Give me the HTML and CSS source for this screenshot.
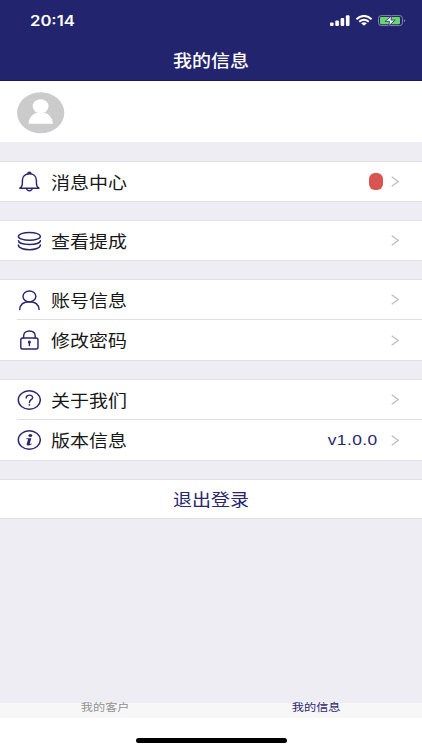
FILE: index.html
```html
<!DOCTYPE html>
<html lang="zh-CN">
<head>
    <meta charset="UTF-8">
    <meta name="viewport" content="width=device-width, initial-scale=1.0">
    <title>我的信息</title>
    <link rel="stylesheet" href="styles.css">
</head>
<body>
    <header class="header">
        <div class="status-bar">
            <span class="time">20:14</span>
            <div class="status-icons">
                <svg class="signal" width="20" height="12" viewBox="0 0 20 12">
                    <rect x="0" y="7.5" width="3.6" height="3.5" rx="1"/>
                    <rect x="5.3" y="5.5" width="3.6" height="5.5" rx="1"/>
                    <rect x="10.6" y="3" width="3.6" height="8" rx="1"/>
                    <rect x="15.9" y="0.3" width="3.6" height="10.7" rx="1"/>
                </svg>
                <svg class="wifi" width="18" height="12" viewBox="0 0 18 12">
                    <path d="M1.4 4.2Q9 -2.2 16.6 4.2" stroke-width="2.1"/>
                    <path d="M4.2 6.8Q9 2.8 13.8 6.8" stroke-width="1.9"/>
                    <path class="dot" d="M6.1 8.3Q9 6.2 11.9 8.3L9 10.8Z"/>
                </svg>
                <svg class="battery" width="28" height="12" viewBox="0 0 28 12">
                    <rect x="0.5" y="0.6" width="24" height="10" rx="2.8" fill="none" stroke="#8585af"/>
                    <rect x="2" y="2" width="20" height="7.2" rx="1.3" fill="#69d66c"/>
                    <path d="M26 4.2Q28.4 5.6 26 7.2Z" fill="#8585af"/>
                    <path d="M13.8 0.8L7.2 6.3H11.6L10.7 10.8L17.2 5.1H13Z" fill="#fff" stroke="#23246e" stroke-width="0.8"/>
                </svg>
            </div>
        </div>
        <h1 class="title"><span class="wide">我的信息</span></h1>
    </header>

    <main class="content">
        <section class="profile">
            <svg class="avatar" width="48" height="42" viewBox="0 0 48 42">
                <ellipse cx="23.7" cy="20.8" rx="23.6" ry="20.5" fill="#cbcbcb"/>
                <ellipse cx="23.6" cy="14.2" rx="7.9" ry="7" fill="#fff"/>
                <path d="M11.5 31.8C11.7 25 16.7 21.5 20.2 20.6Q23.7 22 27.2 20.6C30.7 21.5 35.7 25 35.9 31.8Z" fill="#fff"/>
            </svg>
        </section>

        <section class="panel">
            <a class="row">
                <svg class="icon" width="24" height="22" viewBox="0 0 24 22">
                    <path d="M2.8 17.2Q5.4 15.8 5.4 11.5V9.3C5.4 5.2 8.4 2.8 12.4 2.8S19.4 5.2 19.4 9.3V11.5Q19.4 15.8 22 17.2Z"/>
                    <path d="M10.9 2.7Q10.9 1.3 12.4 1.3T13.9 2.7M9.6 17.5Q9.9 19.7 12.4 19.7T15.2 17.5"/>
                </svg>
                <span class="label wide">消息中心</span>
                <i class="badge"></i>
                <svg class="arrow" width="8" height="11" viewBox="0 0 8 11"><path d="M0.7 0.7L7.2 5.5L0.7 10.3"/></svg>
            </a>
        </section>

        <section class="panel">
            <a class="row">
                <svg class="icon" width="24" height="22" viewBox="0 0 24 22">
                    <ellipse cx="12.4" cy="6.4" rx="11" ry="3.9"/>
                    <path d="M1.4 10.6C1.4 15.8 23.4 15.8 23.4 10.6M1.4 15C1.4 21.2 23.4 21.2 23.4 15"/>
                </svg>
                <span class="label wide">查看提成</span>
                <svg class="arrow" width="8" height="11" viewBox="0 0 8 11"><path d="M0.7 0.7L7.2 5.5L0.7 10.3"/></svg>
            </a>
        </section>

        <section class="panel">
            <a class="row">
                <svg class="icon" width="24" height="22" viewBox="0 0 24 22">
                    <ellipse cx="12.4" cy="7.4" rx="6.4" ry="5.5"/>
                    <path d="M2.7 20.5C3.1 15.9 6.4 12.7 12.4 12.7S21.7 15.9 22.1 20.5"/>
                </svg>
                <span class="label wide">账号信息</span>
                <svg class="arrow" width="8" height="11" viewBox="0 0 8 11"><path d="M0.7 0.7L7.2 5.5L0.7 10.3"/></svg>
            </a>
            <a class="row">
                <svg class="icon" width="24" height="22" viewBox="0 0 24 22">
                    <rect x="3.8" y="9" width="17.2" height="11" rx="1.8"/>
                    <path d="M6.6 9V7.2C6.6 3.8 8.9 1.9 12.4 1.9S18.2 3.8 18.2 7.2V9"/>
                    <path d="M12.4 12.8V16.5"/>
                    <circle class="fill" cx="12.4" cy="13" r="1.5"/>
                </svg>
                <span class="label wide">修改密码</span>
                <svg class="arrow" width="8" height="11" viewBox="0 0 8 11"><path d="M0.7 0.7L7.2 5.5L0.7 10.3"/></svg>
            </a>
        </section>

        <section class="panel">
            <a class="row">
                <svg class="icon" width="24" height="22" viewBox="0 0 24 22">
                    <ellipse cx="12.3" cy="11" rx="11" ry="9.2"/>
                    <path d="M9.2 8.9C9.1 5.3 15.8 5.1 15.6 8.8C15.5 10.9 12.4 10.6 12.4 13.5"/>
                    <circle class="fill" cx="12.4" cy="15.8" r="0.9"/>
                </svg>
                <span class="label wide">关于我们</span>
                <svg class="arrow" width="8" height="11" viewBox="0 0 8 11"><path d="M0.7 0.7L7.2 5.5L0.7 10.3"/></svg>
            </a>
            <a class="row">
                <svg class="icon" width="24" height="22" viewBox="0 0 24 22">
                    <ellipse cx="12.3" cy="11" rx="11" ry="9.2"/>
                    <ellipse class="fill" cx="13.3" cy="6.6" rx="1.9" ry="1.5"/>
                    <path class="fill" d="M9.3 9.3H14.3L12.7 15L14.7 14.4V15.2Q12.8 16.5 10.8 16.5Q9.3 16.4 9.7 14.9L11.1 10.2L9.3 9.9Z"/>
                </svg>
                <span class="label wide">版本信息</span>
                <span class="version">v1.0.0</span>
                <svg class="arrow" width="8" height="11" viewBox="0 0 8 11"><path d="M0.7 0.7L7.2 5.5L0.7 10.3"/></svg>
            </a>
        </section>

        <button class="logout"><span class="wide">退出登录</span></button>
    </main>

    <nav class="tabbar">
        <a class="tab"><span class="wide">我的客户</span></a>
        <a class="tab active"><span class="wide">我的信息</span></a>
    </nav>
    <footer class="home-area">
        <div class="home-indicator"></div>
    </footer>
</body>
</html>
```
FILE: styles.css
```css
* {
    margin: 0;
    padding: 0;
    box-sizing: border-box;
}

body {
    display: flex;
    flex-direction: column;
    height: 750px;
    overflow: hidden;
    background-color: #fff;
    font-family: "Liberation Sans", "Noto Sans CJK SC", sans-serif;
    color: #171717;
}

/* 加宽文字 */
.wide {
    display: block;
    transform: scaleX(1.15);
    white-space: nowrap;
}

/* 顶部 */
.header {
    height: 81px;
    background-color: #23246e;
    border-bottom: 1px solid #191955;
    color: #fff;
}

.status-bar {
    display: flex;
    justify-content: space-between;
    height: 42px;
    padding: 0 16px 0 30px;
    align-items: center;
}

.time {
    font-family: Inter, sans-serif;
    font-size: 14px;
    font-weight: 600;
    line-height: 20px;
    transform: scaleX(1.19);
    transform-origin: left;
}

.status-icons {
    display: flex;
    align-items: center;
}

.signal {
    fill: #fff;
    margin-right: 5px;
}

.wifi {
    fill: none;
    stroke: #fff;
    margin-right: 5px;
}

.wifi .dot {
    fill: #fff;
    stroke: none;
}

.title {
    display: flex;
    justify-content: center;
    font-size: 16.5px;
    font-weight: 500;
    line-height: 39px;
}

/* 内容 */
.content {
    height: 622px;
    background-color: #eeedf3;
}

.profile {
    height: 61px;
    padding: 11px 17px;
    background-color: #fff;
    margin-bottom: 19px;
}

.avatar {
    display: block;
}

.panel {
    background-color: #fff;
    border-top: 1px solid #e1e0e4;
    border-bottom: 1px solid #e1e0e4;
    margin-bottom: 18px;
}

.row {
    display: flex;
    align-items: center;
    height: 39px;
    margin-left: 17px;
    padding-right: 23px;
}

.row + .row {
    height: 41px;
    border-top: 1px solid #dfdfe3;
}

.icon {
    fill: none;
    stroke: #29266f;
    stroke-width: 1.45;
    stroke-linejoin: round;
    stroke-linecap: round;
}

.icon .fill {
    fill: #29266f;
    stroke: none;
}

.label {
    margin-left: 10px;
    margin-right: auto;
    padding-top: 2px;
    font-size: 16.5px;
    line-height: 24px;
    transform-origin: left;
}

.badge {
    width: 14px;
    height: 17px;
    margin-right: 8px;
    border-radius: 6px;
    background-color: #d9534f;
}

.version {
    margin-right: 13px;
    font-size: 15.5px;
    letter-spacing: 0.4px;
    color: #29266f;
    transform: scaleX(1.12);
    transform-origin: right;
}

.arrow {
    fill: none;
    stroke: #bdbdc1;
    stroke-width: 1.2;
}

.logout {
    display: flex;
    justify-content: center;
    align-items: center;
    width: 100%;
    height: 40px;
    background-color: #fff;
    border: 0;
    border-top: 1px solid #e1e0e4;
    border-bottom: 1px solid #e1e0e4;
    font-family: inherit;
    font-size: 16.5px;
    color: #29266f;
}

/* 底部导航 */
.tabbar {
    display: flex;
    height: 15px;
    background-color: #f7f7f7;
}

.tab {
    display: flex;
    flex: 1;
    justify-content: center;
    font-size: 10.6px;
    line-height: 12px;
    margin-top: -2px;
    color: #929292;
}

.tab.active {
    color: #29266f;
}

.home-area {
    display: flex;
    flex: 1;
    justify-content: center;
    align-items: flex-start;
    padding-top: 20px;
}

.home-indicator {
    width: 151px;
    height: 5px;
    border-radius: 3px;
    background-color: #000;
}
```
